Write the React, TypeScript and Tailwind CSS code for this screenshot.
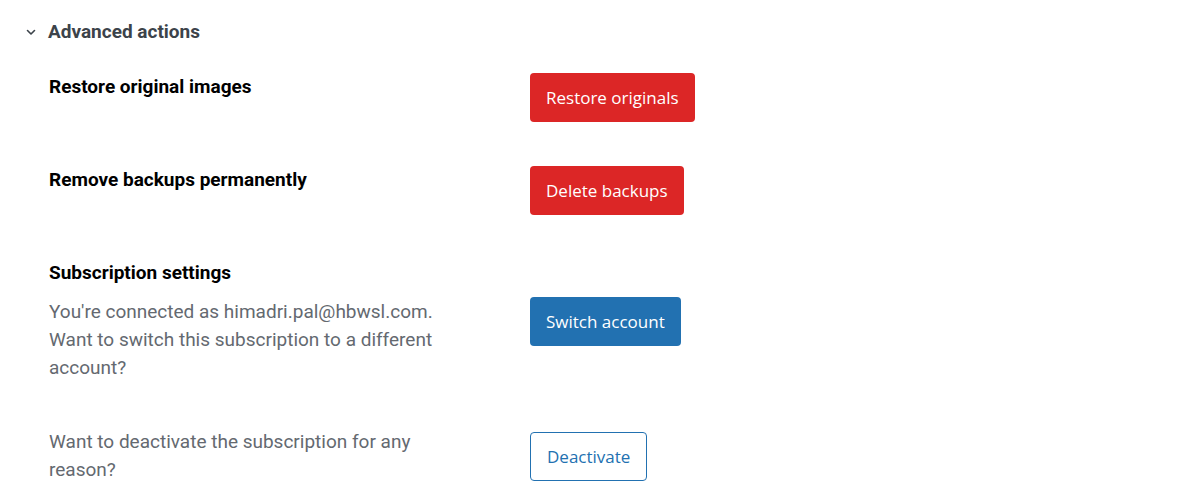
import React from "react";

const roboto = { fontFamily: "Roboto, 'Liberation Sans', sans-serif" };

function Btn({ children, variant }: { children: React.ReactNode; variant: "red" | "blue" | "outline" }) {
  const base =
    "h-[49px] px-[16px] rounded-[4px] text-[17px] leading-none flex items-center whitespace-nowrap font-['Open_Sans','Noto_Sans',sans-serif]";
  const cls =
    variant === "red"
      ? "bg-[#dc2626] text-white"
      : variant === "blue"
      ? "bg-[#2271b1] text-white"
      : "bg-white text-[#2271b1] border border-[#2271b1]";
  return <button className={`${base} ${cls}`}>{children}</button>;
}

export default function App() {
  return (
    <div className="w-[1177px] h-[499px] bg-white overflow-hidden" style={roboto}>
      <div className="pt-[18px]">
        <div className="flex items-center h-[28px] pl-[25px]">
          <svg width="12" height="12" viewBox="0 0 12 12" className="mr-[11px]">
            <path d="M2.5 4.5 L6 8 L9.5 4.5" fill="none" stroke="#3c434a" strokeWidth="1.6" strokeLinecap="round" strokeLinejoin="round" />
          </svg>
          <span className="text-[19px] font-bold text-[#3c434a]">Advanced actions</span>
        </div>

        <div className="pl-[49px]">
          <div className="flex mt-[27px]">
            <div className="w-[481px] text-[19px] leading-[28px] font-bold text-black">Restore original images</div>
            <div>
              <Btn variant="red">Restore originals</Btn>
            </div>
          </div>

          <div className="flex mt-[44px]">
            <div className="w-[481px] text-[19px] leading-[28px] font-bold text-black">Remove backups permanently</div>
            <div>
              <Btn variant="red">Delete backups</Btn>
            </div>
          </div>

          <div className="mt-[44px] text-[19px] leading-[28px] font-bold text-black">Subscription settings</div>
          <div className="flex mt-[11px]">
            <div className="w-[481px]">
              <p className="w-[410px] text-[19px] leading-[28px] text-[#646970]">
                You're connected as himadri.pal@hbwsl.com. Want to switch this subscription to a different account?
              </p>
            </div>
            <div className="-mt-[1px]">
              <Btn variant="blue">Switch account</Btn>
            </div>
          </div>

          <div className="flex mt-[46px]">
            <div className="w-[481px]">
              <p className="w-[410px] text-[19px] leading-[28px] text-[#646970]">
                Want to deactivate the subscription for any reason?
              </p>
            </div>
            <div className="mt-[4px]">
              <Btn variant="outline">Deactivate</Btn>
            </div>
          </div>
        </div>
      </div>
    </div>
  );
}
